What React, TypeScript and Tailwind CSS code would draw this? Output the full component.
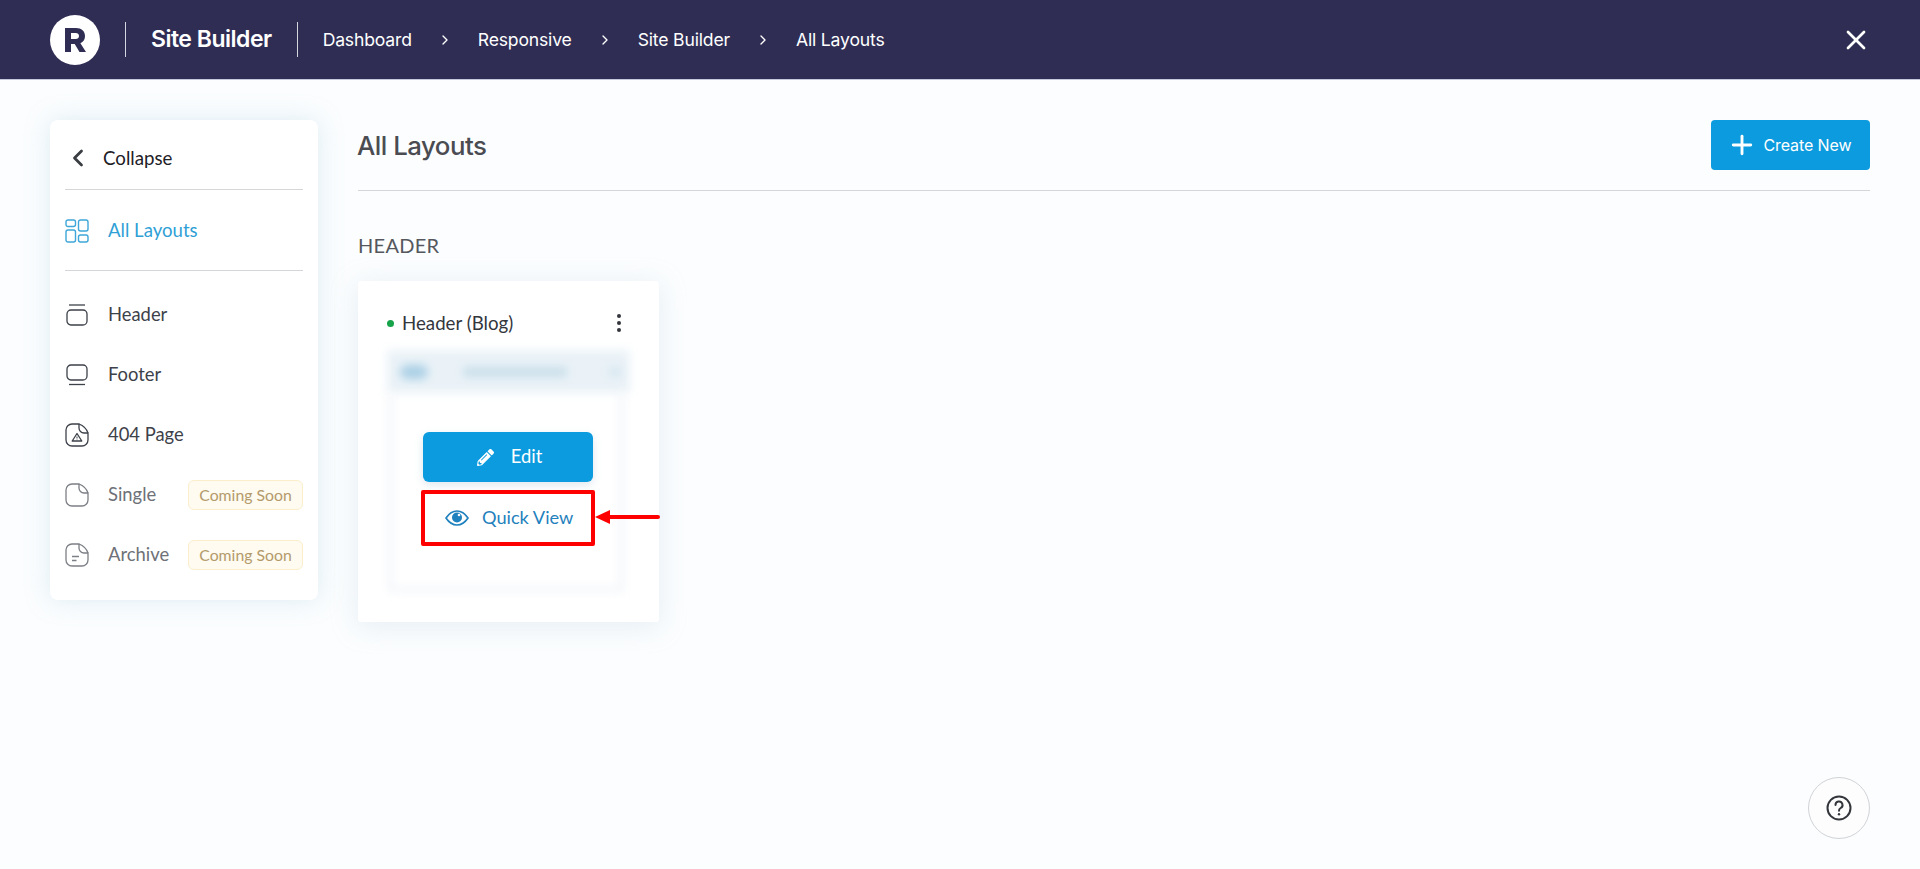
import { ChevronLeft, ChevronRight, Plus, X } from "lucide-react";
import { FaPencilAlt } from "react-icons/fa";

const lato = "font-['Lato','Liberation_Sans',sans-serif]";
const inter = "font-['Inter','Liberation_Sans',sans-serif]";

const crumbs = ["Dashboard", "Responsive", "Site Builder", "All Layouts"];

function LayoutsIcon() {
  return (
    <svg width="24" height="24" viewBox="0 0 24 24" fill="none" stroke="#3ea6d8" strokeWidth="1.4">
      <rect x="1" y="1" width="9.5" height="6.5" rx="2" />
      <rect x="13.5" y="1" width="9.5" height="11" rx="2" />
      <rect x="1" y="11" width="9.5" height="12" rx="2" />
      <rect x="13.5" y="16" width="9.5" height="7" rx="2" />
    </svg>
  );
}

function HeaderIcon() {
  return (
    <svg width="22" height="22" viewBox="0 0 22 22" fill="none" stroke="#3d4149" strokeWidth="1.3">
      <path d="M3 1h16" />
      <rect x="1" y="6" width="20" height="15" rx="4" />
    </svg>
  );
}

function FooterIcon() {
  return (
    <svg width="22" height="22" viewBox="0 0 22 22" fill="none" stroke="#3d4149" strokeWidth="1.3">
      <rect x="1" y="1" width="20" height="15" rx="4" />
      <path d="M3 20.5h16" />
    </svg>
  );
}

function PageIcon({ color, kind }: { color: string; kind: "warn" | "plain" | "lines" }) {
  return (
    <svg width="24" height="24" viewBox="0 0 24 24" fill="none" stroke={color} strokeWidth="1.3" strokeLinejoin="round">
      <path d="M14 1H7a6 6 0 0 0-6 6v10a6 6 0 0 0 6 6h10a6 6 0 0 0 6-6v-7h-4a5 5 0 0 1-5-5z" />
      <path d="M14 1c4 1.500 7.500 4.500 9 9" />
      {kind === "warn" && (
        <>
          <path d="M12 10.500l4.800 7.500H7.200z" />
          <path d="M12 13.500v2M12 16.600v.4" strokeWidth="1" />
        </>
      )}
      {kind === "lines" && <path d="M7 13.500h7M7 17.500h4.500" />}
    </svg>
  );
}

function EyeIcon() {
  return (
    <svg width="24" height="16" viewBox="0 0 24 16" fill="none">
      <path d="M1 8C4 3.500 7.800 1 12 1s8 2.500 11 7c-3 4.500-6.800 7-11 7S4 12.500 1 8z" stroke="#1f81bd" strokeWidth="1.700" strokeLinejoin="round" />
      <circle cx="12" cy="7.500" r="5" fill="#1f81bd" />
      <circle cx="14" cy="5" r="1.300" fill="#fff" />
    </svg>
  );
}

function NavRow({ icon, label, muted, soon }: { icon: React.ReactNode; label: string; muted?: boolean; soon?: boolean }) {
  return (
    <div className="flex items-center h-[60px]">
      <div className="w-[24px] flex justify-center shrink-0">{icon}</div>
      <span className={`ml-[19px] text-[18.4px] ${muted ? "text-[#6e7178]" : "text-[#3d4149]"}`}>{label}</span>
      {soon && (
        <span className="ml-auto h-[30px] w-[115px] flex items-center justify-center rounded-[6px] border border-[#fbeecb] bg-[#fffbf0] text-[15.8px] text-[#b39a6b]">
          Coming Soon
        </span>
      )}
    </div>
  );
}

function Sidebar() {
  return (
    <aside className={`${lato} w-[268px] h-[480px] shrink-0 rounded-[8px] bg-white px-[15px] shadow-[0_0_24px_rgba(170,205,225,0.35)]`}>
      <div className="flex items-center h-[70px] pt-[7px] border-b border-[#d4d6d9]">
        <ChevronLeft size={28} strokeWidth={2.4} className="text-[#3a3d42] -ml-[1px]" />
        <span className="ml-[11px] text-[18.7px] text-[#1d2026]">Collapse</span>
      </div>
      <div className="flex items-center h-[81px] pt-[1px] border-b border-[#d4d6d9]">
        <LayoutsIcon />
        <span className="ml-[19px] text-[18.6px] text-[#2f9fd6]">All Layouts</span>
      </div>
      <div className="pt-[14px]">
        <NavRow icon={<HeaderIcon />} label="Header" />
        <NavRow icon={<FooterIcon />} label="Footer" />
        <NavRow icon={<PageIcon color="#3d4149" kind="warn" />} label="404 Page" />
        <NavRow icon={<PageIcon color="#7c7f85" kind="plain" />} label="Single" muted soon />
        <NavRow icon={<PageIcon color="#7c7f85" kind="lines" />} label="Archive" muted soon />
      </div>
    </aside>
  );
}

function LayoutCard() {
  return (
    <div className={`${lato} relative w-[301px] h-[341px] bg-white rounded-[3px] px-[29px] shadow-[0_4px_26px_rgba(190,210,225,0.35)]`}>
      <div className="flex items-center h-[84px]">
        <span className="w-[7px] h-[7px] rounded-full bg-[#16a34a]" />
        <span className="ml-[8px] text-[18.7px] text-[#33363d]">Header (Blog)</span>
        <span className="ml-auto mr-[9px] flex flex-col gap-[3px]">
          <span className="w-[4px] h-[4px] rounded-full bg-[#33363d]" />
          <span className="w-[4px] h-[4px] rounded-full bg-[#33363d]" />
          <span className="w-[4px] h-[4px] rounded-full bg-[#33363d]" />
        </span>
      </div>

      {/* blurred thumbnail behind the two actions */}
      <div className="absolute left-[29px] top-[69px] w-[243px] h-[43px] rounded-[4px] bg-[#eaf2f7] blur-[5px] flex items-center">
        <span className="ml-[13px] w-[28px] h-[14px] rounded-full bg-[#a9cfe5]" />
        <span className="ml-[35px] w-[104px] h-[10px] bg-[#c9deea]" />
        <span className="ml-auto mr-[8px] w-[14px] h-[10px] bg-[#d8e7f0]" />
      </div>
      <div className="absolute left-[29px] top-[112px] w-[238px] h-[200px] border-[7px] border-t-0 border-[#f6f8fb] blur-[4px]" />

      <div className="absolute left-[65px] top-[151px] w-[170px] h-[50px] rounded-[6px] bg-[#0b9bde] text-white flex items-center justify-center pl-[3px] shadow-[0_3px_8px_rgba(150,180,200,0.3)]">
        <FaPencilAlt size={17} />
        <span className="ml-[17px] text-[18.4px]">Edit</span>
      </div>
      <div className="absolute left-[63px] top-[209px] w-[174px] h-[56px] border-[4px] border-[#ff0000] rounded-[2px] bg-white flex items-center text-[#1f81bd]">
        <span className="ml-[20px]">
          <EyeIcon />
        </span>
        <span className="ml-[13px] text-[18.2px]">Quick View</span>
      </div>
      {/* annotation arrow */}
      <svg className="absolute left-[235px] top-[226px]" width="67" height="20" viewBox="0 0 67 20">
        <path d="M2 10l15-7v14z" fill="#ff0000" />
        <path d="M14 10h51" stroke="#ff0000" strokeWidth="4" strokeLinecap="round" />
      </svg>
    </div>
  );
}

export default function App() {
  return (
    <div className="min-h-[869px] bg-[#fbfdfe] flex flex-col">
      <header className={`${inter} h-[80px] bg-[#2f2d54] border-b border-[#c5c8dc] flex items-center pl-[50px] pr-[48px] text-white`}>
        <div className="w-[50px] h-[50px] rounded-full bg-white flex items-center justify-center">
          <svg width="24" height="26" viewBox="0 0 24 26">
            <path
              fill="#2f2d54"
              fillRule="evenodd"
              d="M2 1h11c5.500 0 9 3 9 8 0 3.500-1.700 6-4.600 7.200L23 25h-6.500l-4.800-8H8v8H2zM8 6v6h4.700c2 0 3.300-1.200 3.300-3s-1.300-3-3.300-3z"
            />
          </svg>
        </div>
        <div className="w-px h-[35px] bg-white/80 ml-[25px]" />
        <span className="ml-[25px] text-[23px] font-semibold tracking-[-0.5px]">Site Builder</span>
        <div className="w-px h-[35px] bg-white/80 ml-[25px]" />
        <nav className="flex items-center ml-[25px] pt-[1px] text-[17.6px] tracking-[-0.18px]">
          {crumbs.map((c, i) => (
            <div key={c} className="flex items-center">
              {i > 0 && <ChevronRight size={16} strokeWidth={2} className="mx-[25px]" />}
              <span>{c}</span>
            </div>
          ))}
        </nav>
        <X size={32} strokeWidth={2} className="ml-auto" />
      </header>

      <div className="flex pl-[50px] pr-[50px] pt-[40px] gap-[40px]">
        <Sidebar />
        <main className="flex-1">
          <div className="flex items-center justify-between h-[71px] border-b border-[#d4d6d9] pb-[21px]">
            <h1 className={`${inter} mt-[3px] -ml-[1px] text-[25.8px] font-medium tracking-[-0.5px] text-[#4a4c52]`}>All Layouts</h1>
            <button className={`${inter} w-[159px] h-[50px] rounded-[4px] bg-[#0b9bde] text-white flex items-center justify-center text-[16px] tracking-[-0.1px] pr-[2px]`}>
              <Plus size={30} strokeWidth={2.3} />
              <span className="ml-[6px]">Create New</span>
            </button>
          </div>
          <h2 className={`${lato} mt-[43px] mb-[24px] text-[20px] leading-[23px] text-[#55575d] tracking-[0.3px]`}>HEADER</h2>
          <LayoutCard />
        </main>
      </div>

      {/* help bubble floats over the page */}
      <div className="fixed left-[1808px] top-[777px] w-[62px] h-[62px] rounded-full border border-[#cfd2d6] bg-[#fdfdfe] flex items-center justify-center">
        <svg width="26" height="26" viewBox="0 0 26 26" fill="none" stroke="#33363b" strokeWidth="2" strokeLinecap="round">
          <circle cx="13" cy="13" r="11.500" />
          <path d="M9.500 10a3.500 3.500 0 1 1 5.200 3c-1.200.7-1.700 1.300-1.700 2.700" />
          <path d="M13 19.200v.1" strokeWidth="2.400" />
        </svg>
      </div>
    </div>
  );
}
